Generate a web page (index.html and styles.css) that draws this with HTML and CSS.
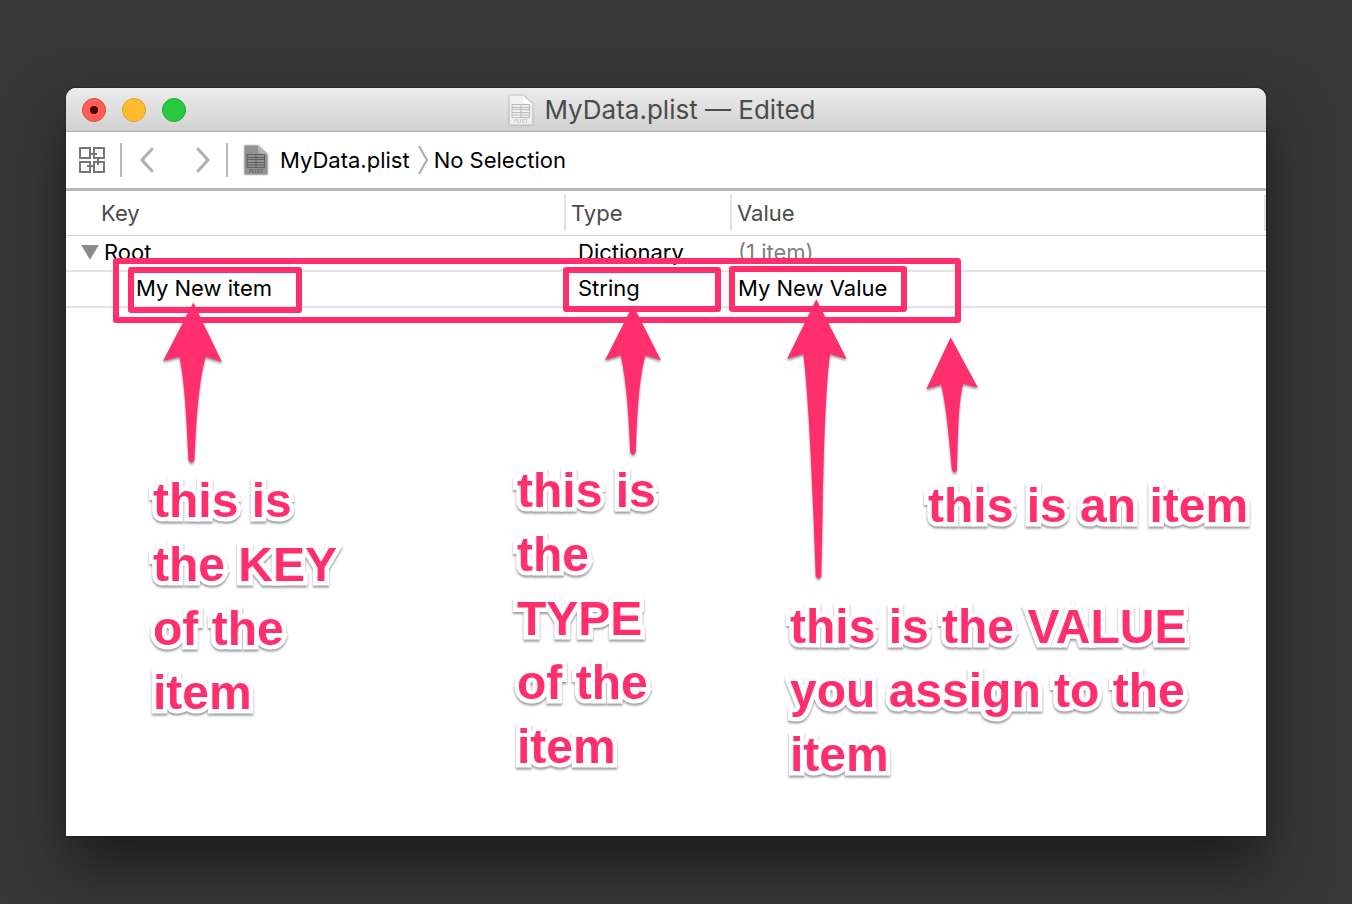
FILE: index.html
```
<!DOCTYPE html>
<html lang="en">
<head>
  <meta charset="UTF-8">
  <meta name="viewport" content="width=device-width, initial-scale=1.0">
  <title>MyData.plist</title>
  <link rel="stylesheet" href="styles.css">
</head>
<body>

  <main class="window">
    <header class="titlebar">
      <div class="lights">
        <button class="light close" aria-label="Close"></button>
        <button class="light minimize" aria-label="Minimize"></button>
        <button class="light zoom" aria-label="Zoom"></button>
      </div>
      <h1 class="title">
        <svg class="doc doc-light" width="24" height="30" viewBox="0 0 24 30">
          <path class="sheet" d="M.5.5H14L23.500 9.500V29.500H.5z"/>
          <path class="fold" d="M14 .5V6Q14.500 8.500 17 8.500L23.500 9.500z"/>
          <path class="lines" d="M3 9.500H20.500V22.500H3zM3 12.500H20.500M3 14.500H20.500M3 17.500H20.500M3 20H20.500M12 9.500V22.500"/>
          <text x="12" y="28" text-anchor="middle">PLIST</text>
        </svg>
        <span>MyData.plist — Edited</span>
      </h1>
    </header>

    <nav class="jumpbar">
      <button class="related" aria-label="Related items">
        <svg width="26" height="26" viewBox="0 0 26 26">
          <path d="M1 1H11V11H1zM15 1H25V11H15zM1 15H11V25H1zM15 15H25V25H15zM11 7H18M15 5V9M19 11V18M17 15H22M8 19H15M11 17V21"/>
        </svg>
      </button>
      <span class="divider"></span>
      <div class="history">
        <button aria-label="Back">
          <svg width="16" height="26" viewBox="0 0 16 26"><path d="M13 2L3 13L13 24"/></svg>
        </button>
        <button aria-label="Forward">
          <svg width="16" height="26" viewBox="0 0 16 26"><path d="M3 2L13 13L3 24"/></svg>
        </button>
      </div>
      <span class="divider"></span>
      <button class="crumb">
        <svg class="doc doc-dark" width="24" height="30" viewBox="0 0 24 30">
          <path class="sheet" d="M.5.5H14L23.500 9.500V29.500H.5z"/>
          <path class="fold" d="M14 .5V6Q14.500 8.500 17 8.500L23.500 9.500z"/>
          <path class="lines" d="M3 9.500H20.500V22.500H3zM3 12.500H20.500M3 14.500H20.500M3 17.500H20.500M3 20H20.500M12 9.500V22.500"/>
          <text x="12" y="28" text-anchor="middle">PLIST</text>
        </svg>
        MyData.plist
      </button>
      <svg class="separator" width="12" height="28" viewBox="0 0 12 28"><path d="M2 0L10 14L2 28"/></svg>
      <button class="crumb">No Selection</button>
    </nav>

    <table class="plist">
      <thead>
        <tr>
          <th class="col-key"><span>Key</span></th>
          <th class="col-type"><span>Type</span></th>
          <th class="col-value"><span>Value</span></th>
        </tr>
      </thead>
      <tbody>
        <tr>
          <td class="root"><button class="disclosure" aria-label="Collapse Root"></button>Root</td>
          <td>Dictionary</td>
          <td class="count">(1 item)</td>
        </tr>
        <tr>
          <td class="child">My New item</td>
          <td>String</td>
          <td>My New Value</td>
        </tr>
      </tbody>
    </table>

    <div class="notes">
      <svg class="marks" width="1200" height="748" viewBox="0 0 1200 748" aria-hidden="true">
        <g class="boxes">
          <rect x="50" y="173" width="842" height="59"/>
          <rect x="65" y="182" width="168" height="40"/>
          <rect x="500" y="182" width="152" height="39"/>
          <rect x="666" y="181" width="172" height="40"/>
        </g>
        <g class="arrows">
          <path d="M127.300 214.500L156 274L139.700 268.700C132 295 130 340 128.500 372Q125.500 377 122.500 372C121 340 119 295 113.500 268.700L97 273z"/>
          <path d="M567 217L595 272.300L579.300 267.300C572 295 571 335 569.800 364Q567 369 564.200 364C563 335 561 295 554.700 267.300L539 272.300z"/>
          <path d="M750.300 211.300L780.700 271L764 266C758 310 757 410 755.300 488Q752.500 493 749.700 488C747 410 743 310 737.300 266L721 271z"/>
          <path d="M884.700 249.300L912 299.700L897.300 295.700C892 315 892 350 891 382Q888.500 387 886 382C883 350 880 315 875 296.700L860.300 301z"/>
        </g>
      </svg>
      <p class="note note-key">this is<br>the KEY<br>of the<br>item</p>
      <p class="note note-type">this is<br>the<br>TYPE<br>of the<br>item</p>
      <p class="note note-value">this is the VALUE<br>you assign to the<br>item</p>
      <p class="note note-item">this is an item</p>
    </div>
  </main>

</body>
</html>
```
FILE: styles.css
```
* {
  box-sizing: border-box;
}
body {
  margin: 0;
  min-height: 100vh;
  padding: 88px 86px 68px 66px;
  display: flex;
  background-color: #383838;
  font-family: Inter, "Liberation Sans", sans-serif;
  font-size: 22px;
}
button {
  padding: 0;
  border: none;
  background: none;
  font: inherit;
  color: inherit;
}
svg {
  display: block;
  fill: none;
}

/* window */
.window {
  position: relative;
  flex: 1;
  background-color: #fff;
  border-radius: 10px 10px 0 0;
  box-shadow: 0 0 2px rgba(0, 0, 0, 0.6), 0 32px 60px rgba(0, 0, 0, 0.5);
}
.titlebar {
  display: grid;
  grid-template-columns: 1fr auto 1fr;
  align-items: center;
  height: 44px;
  padding: 0 20px 0 16px;
  border-bottom: 1px solid #b0b0b0;
  border-radius: 10px 10px 0 0;
  background: linear-gradient(#ececec, #d1d1d1);
}
.lights {
  display: flex;
  gap: 16px;
}
.light {
  display: flex;
  align-items: center;
  justify-content: center;
  width: 24px;
  height: 24px;
  border: 1px solid;
  border-radius: 50%;
}
.close {
  background-color: #ff5f57;
  border-color: #e2463f;
}
.close::after {
  content: "";
  width: 8px;
  height: 8px;
  border-radius: 50%;
  background-color: #4d0000;
}
.minimize {
  background-color: #ffbd2e;
  border-color: #e0a028;
}
.zoom {
  background-color: #28ca42;
  border-color: #1dad2c;
}
.title {
  display: flex;
  align-items: center;
  gap: 12px;
  margin: 0;
  padding-right: 4px;
  font-size: 26px;
  line-height: 32px;
  font-weight: 400;
  color: #4b4b4b;
}

/* document icon */
.doc {
  filter: drop-shadow(0 0 1px rgba(0, 0, 0, 0.4));
}
.doc-light {
  --sheet: #f1f1f1;
  --fold: #fff;
  --ink: #bababa;
}
.doc-dark {
  --sheet: #929292;
  --fold: #b4b4b4;
  --ink: #5f5f5f;
}
.doc text {
  fill: var(--ink);
  font-size: 5px;
  font-weight: 600;
}
.sheet {
  fill: var(--sheet);
}
.fold {
  fill: var(--fold);
}
.lines {
  stroke: var(--ink);
}

/* jump bar */
.jumpbar {
  display: flex;
  align-items: center;
  height: 59px;
  padding: 0 13px;
  border-bottom: 3px solid #b8b8b8;
}
.related svg {
  stroke: #777;
  stroke-width: 2;
}
.divider {
  width: 2px;
  height: 34px;
  background-color: #b8b8b8;
}
.related + .divider {
  margin-left: 15px;
}
.history {
  display: flex;
  gap: 40px;
  padding: 0 15px 0 17px;
}
.history svg {
  stroke: #b0b0b0;
  stroke-width: 3;
  stroke-linecap: round;
}
.crumb {
  display: flex;
  align-items: center;
  gap: 12px;
  color: #000;
}
.divider + .crumb {
  margin-left: 16px;
}
.separator {
  margin: 0 5px 0 7px;
  stroke: #aaa;
  stroke-width: 2;
}

/* property list */
.plist {
  width: 100%;
  table-layout: fixed;
  border-collapse: collapse;
  color: #000;
}
.plist th {
  height: 44px;
  padding: 0;
  border-bottom: 1px solid #d4d4d4;
  font-weight: 400;
  text-align: left;
  color: #4b4b4b;
}
.plist th span {
  display: block;
  height: 36px;
  padding-left: 5px;
  border-right: 2px solid #e2e2e2;
  line-height: 36px;
}
.plist .col-key span {
  padding-left: 35px;
}
.col-key {
  width: 500px;
}
.col-type {
  width: 166px;
}
.plist td {
  height: 36px;
  padding: 0 0 2px 12px;
  border-bottom: 2px solid #e4e4e4;
  line-height: 32px;
}
.plist td:last-child {
  padding-left: 6px;
}
.plist .root {
  padding-left: 15px;
}
.plist .child {
  padding-left: 70px;
}
.plist .count {
  color: #808080;
}
.disclosure {
  width: 18px;
  height: 15px;
  margin-right: 5px;
  background-color: #8a8a8a;
  clip-path: polygon(0 0, 100% 0, 50% 100%);
}

/* annotations over the window */
.notes {
  position: absolute;
  top: 0;
  left: 0;
}
.boxes {
  stroke: #ff2f6e;
  stroke-width: 6;
  stroke-linejoin: round;
}
.arrows {
  fill: #ff2f6e;
  filter: drop-shadow(0 2px 1px rgba(0, 0, 0, 0.4));
}
.note {
  position: absolute;
  margin: 0;
  font: bold 48px/64px "Liberation Sans", Arial, sans-serif;
  white-space: nowrap;
  color: #ff2f6e;
  -webkit-text-stroke: 9px #fff;
  paint-order: stroke fill;
  stroke-linejoin: round;
  filter: drop-shadow(0 2px 1px rgba(0, 0, 0, 0.4));
}
.note-key {
  top: 381px;
  left: 87px;
}
.note-type {
  top: 371px;
  left: 451px;
}
.note-value {
  top: 507px;
  left: 724px;
}
.note-item {
  top: 386px;
  left: 862px;
}
```
